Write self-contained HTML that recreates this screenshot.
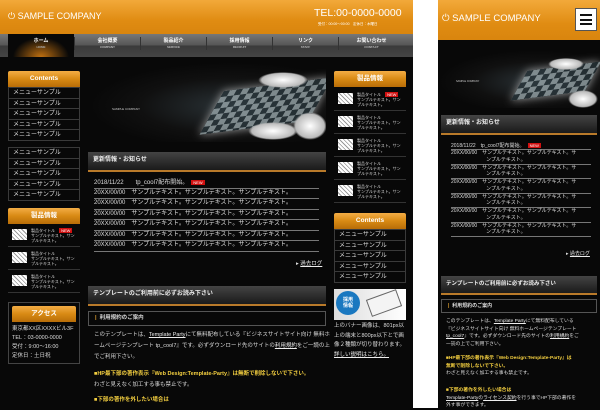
<!DOCTYPE html><html><head><meta charset="utf-8"><style>
*{margin:0;padding:0;box-sizing:border-box}
html,body{background:#080808 !important}
body{width:600px;height:408px;overflow:hidden;font-family:"Liberation Sans","Noto Sans CJK JP",sans-serif;color:#ddd !important;position:relative}
.a{position:absolute}
.bk{background:#080808 !important}
.or{background:linear-gradient(#f2a93a,#e08c12 60%,#d9850e)}
.oh{background:linear-gradient(#f3ad45,#d88a14 50%,#b86d08);text-align:center;font-size:6.5px;font-weight:bold;color:#fff !important;line-height:16px;border-radius:2px 2px 0 0}
.menu{border-top:1px solid #3a3a3a}
.menu div{height:10.6px;border:1px solid #3a3a3a;border-top:none;font-size:6px;line-height:10px;padding-left:4px}
.menu div span,.news span.x,.t span.x{color:#ddd !important}
.bar{background:linear-gradient(#444,#1a1a1a);border-bottom:2px solid #b97a2a;font-size:6px;font-weight:bold;padding-left:5px;color:#eee !important}
.news div{font-size:6px;height:10.5px;line-height:9px;border-bottom:1.5px solid #777;white-space:nowrap}
.new{background:#d01010;color:#fff !important;font-size:4px;padding:0 2px;margin-left:3px}
.t{font-size:5.5px;color:#ddd !important;white-space:nowrap}
.menu div,.news div,.news,.prod b,.t,u{color:#ddd !important}
.y{color:#f5d040 !important;font-weight:bold}
u{color:#eee !important}
.prod{height:23px;border-bottom:1px solid #333;position:relative}
.prod i{position:absolute;left:4px;top:5px;width:15px;height:11px;background:repeating-linear-gradient(45deg,#fff 0 2px,#999 2px 3px)}
.prod b{position:absolute;left:23px;top:4px;font-size:4px;line-height:5px;font-weight:normal}
.chess{background:radial-gradient(ellipse at 60% 55%,#2a3236 0,#101010 45%,#080808 70%)}
.board{position:absolute;background:repeating-conic-gradient(#a9b8bc 0 25%,#2c3a40 0 50%) 0 0/12px 12px;transform:skew(-35deg) rotate(-8deg);opacity:.7;box-shadow:0 0 8px #ccc}
.pc{position:absolute;border-radius:40%;background:radial-gradient(#fff,#bbb 60%,transparent 70%)}
</style></head><body>
<svg class="a" style="left:0;top:0" width="600" height="408"><rect x="0" y="0" width="413" height="408" fill="#080808"/><rect x="413" y="0" width="25" height="408" fill="#ffffff"/><rect x="438" y="0" width="162" height="408" fill="#080808"/></svg>
<!-- desktop -->
<div class="a or" style="left:0;top:0;width:413px;height:34px"></div>
<div class="a" style="left:8px;top:11px;font-size:9px;color:#fff !important">⏻ SAMPLE COMPANY</div>
<div class="a" style="left:314px;top:7px;font-size:10.5px;color:#fff">TEL:00-0000-0000</div>
<div class="a" style="left:318px;top:22px;font-size:3.5px;color:#fff">受付：00:00〜00:00　定休日：木曜日</div>
<div class="a" style="left:0;top:34px;width:413px;height:23px;background:linear-gradient(#777,#555 50%,#3a3a3a 50%,#444)"></div>
<div class="a" style="left:8px;top:34px;width:66px;height:23px;background:radial-gradient(ellipse at 50% 100%,#c07010 0,#080808 60%)"></div>
<div class="a" style="left:8px;top:37px;width:398px;display:flex;font-size:5px;font-weight:bold;text-align:center;color:#fff">
<div style="width:66px">ホーム<br><span style="font-size:3px;color:#aaa">HOME</span></div>
<div style="width:66px;border-left:1px solid #333">会社概要<br><span style="font-size:3px;color:#bbb">COMPANY</span></div>
<div style="width:66px;border-left:1px solid #333">製品紹介<br><span style="font-size:3px;color:#bbb">SERVICE</span></div>
<div style="width:66px;border-left:1px solid #333">採用情報<br><span style="font-size:3px;color:#bbb">RECRUIT</span></div>
<div style="width:66px;border-left:1px solid #333">リンク<br><span style="font-size:3px;color:#bbb">STAFF</span></div>
<div style="width:66px;border-left:1px solid #333">お問い合わせ<br><span style="font-size:3px;color:#bbb">CONTACT</span></div>
</div>
<!-- left col -->
<div class="a oh" style="left:8px;top:71px;width:72px">Contents</div>
<div class="a menu" style="left:8px;top:87px;width:72px"><div>メニューサンプル</div><div>メニューサンプル</div><div>メニューサンプル</div><div>メニューサンプル</div><div>メニューサンプル</div></div>
<div class="a menu" style="left:8px;top:147px;width:72px"><div>メニューサンプル</div><div>メニューサンプル</div><div>メニューサンプル</div><div>メニューサンプル</div><div>メニューサンプル</div></div>
<div class="a oh" style="left:8px;top:208px;width:72px">製品情報</div>
<div class="a" style="left:8px;top:224px;width:72px">
<div class="prod"><i></i><b>製品タイトル <span class="new">NEW</span><br>サンプルテキスト。サン<br>プルテキスト。</b></div>
<div class="prod"><i></i><b>製品タイトル<br>サンプルテキスト。サン<br>プルテキスト。</b></div>
<div class="prod"><i></i><b>製品タイトル<br>サンプルテキスト。サン<br>プルテキスト。</b></div></div>
<div class="a" style="left:8px;top:302px;width:72px;height:62px;border:1px solid #444"></div>
<div class="a oh" style="left:12px;top:306px;width:64px">アクセス</div>
<div class="a t" style="left:12px;top:325px;line-height:9px">東京都XX区XXXXビル3F<br>TEL：03-0000-0000<br>受付：9:00〜16:00<br>定休日：土日祝</div>
<!-- main -->
<div class="a chess" style="left:88px;top:62px;width:238px;height:80px;overflow:hidden">
<div class="board" style="left:128px;top:22px;width:100px;height:44px"></div>
<div class="pc" style="left:170px;top:10px;width:50px;height:16px"></div>
<div class="pc" style="left:205px;top:50px;width:34px;height:28px"></div>
<div class="pc" style="left:160px;top:60px;width:50px;height:18px"></div>
<div class="a" style="left:24px;top:45px;font-size:3px;color:#ccc">SAMPLE COMPANY</div></div>
<div class="a bar" style="left:88px;top:152px;width:238px;height:20px;line-height:17px">更新情報・お知らせ</div>
<div class="a news" style="left:94px;top:178px;width:225px">
<div>2018/11/22　　tp_cool7配布開始。<span class="new">NEW</span></div>
<div>20XX/00/00　サンプルテキスト。サンプルテキスト。サンプルテキスト。</div>
<div>20XX/00/00　サンプルテキスト。サンプルテキスト。サンプルテキスト。</div>
<div>20XX/00/00　サンプルテキスト。サンプルテキスト。サンプルテキスト。</div>
<div>20XX/00/00　サンプルテキスト。サンプルテキスト。サンプルテキスト。</div>
<div>20XX/00/00　サンプルテキスト。サンプルテキスト。サンプルテキスト。</div>
<div>20XX/00/00　サンプルテキスト。サンプルテキスト。サンプルテキスト。</div></div>
<div class="a t" style="left:296px;top:259px">▸ <u>過去ログ</u></div>
<div class="a bar" style="left:88px;top:286px;width:238px;height:20px;line-height:17px">テンプレートのご利用前に必ずお読み下さい</div>
<div class="a t" style="left:88px;top:311px;width:238px;height:15px;border:1px solid #555;line-height:13px;padding-left:6px;font-weight:bold"><span style="color:#e0a030 !important">|</span>&nbsp; 利用規約のご案内</div>
<div class="a t" style="left:94px;top:330px;line-height:11px">このテンプレートは、<u>Template Party</u>にて無料配布している『ビジネスサイトサイト向け 無料ホ<br>ームページテンプレート tp_cool7』です。必ずダウンロード先のサイトの<u>利用規約</u>をご一読の上<br>でご利用下さい。</div>
<div class="a t" style="left:94px;top:369px;line-height:11px"><span class="y">■HP最下部の著作表示『Web Design:Template-Party』は無断で削除しないで下さい。</span><br>わざと見えなく加工する事も禁止です。</div>
<div class="a t y" style="left:94px;top:395px">■下部の著作を外したい場合は</div>
<!-- right col -->
<div class="a oh" style="left:334px;top:71px;width:72px">製品情報</div>
<div class="a" style="left:334px;top:88px;width:72px">
<div class="prod"><i></i><b>製品タイトル <span class="new">NEW</span><br>サンプルテキスト。サン<br>プルテキスト。</b></div>
<div class="prod"><i></i><b>製品タイトル<br>サンプルテキスト。サン<br>プルテキスト。</b></div>
<div class="prod"><i></i><b>製品タイトル<br>サンプルテキスト。サン<br>プルテキスト。</b></div>
<div class="prod"><i></i><b>製品タイトル<br>サンプルテキスト。サン<br>プルテキスト。</b></div>
<div class="prod"><i></i><b>製品タイトル<br>サンプルテキスト。サン<br>プルテキスト。</b></div></div>
<div class="a oh" style="left:334px;top:213px;width:72px">Contents</div>
<div class="a menu" style="left:334px;top:229px;width:72px"><div>メニューサンプル</div><div>メニューサンプル</div><div>メニューサンプル</div><div>メニューサンプル</div><div>メニューサンプル</div></div>
<div class="a" style="left:334px;top:289px;width:72px;height:31px;background:linear-gradient(90deg,#ddd,#fff)"></div>
<div class="a" style="left:336px;top:291px;width:24px;height:24px;border-radius:50%;background:#1a78c0;font-size:5px;font-weight:bold;text-align:center;padding-top:6px;line-height:6px;color:#fff">採用<br>情報</div>
<div class="a" style="left:368px;top:294px;width:32px;height:18px;background:#f4f4f4;border:1px solid #666;transform:rotate(-20deg)"></div>
<div class="a t" style="left:334px;top:322px;line-height:9.5px">上のバナー画像は、801px以<br>上の端末と800px以下とで画<br>像２種類が切り替わります。<br><u>詳しい説明はこちら。</u></div>
<!-- mobile -->
<div class="a or" style="left:438px;top:0;width:162px;height:40px"></div>
<div class="a" style="left:442px;top:13px;font-size:9.5px;color:#fff">⏻ SAMPLE COMPANY</div>
<div class="a" style="left:575px;top:8px;width:22px;height:23px;background:#fff;border:1px solid #555;padding:5px 4px">
<div style="height:2px;background:#111;margin-bottom:2.5px"></div><div style="height:2px;background:#111;margin-bottom:2.5px"></div><div style="height:2px;background:#111"></div></div>
<div class="a chess" style="left:438px;top:50px;width:162px;height:58px;overflow:hidden">
<div class="board" style="left:84px;top:16px;width:68px;height:30px"></div>
<div class="pc" style="left:110px;top:8px;width:36px;height:12px"></div>
<div class="pc" style="left:130px;top:40px;width:30px;height:18px"></div>
<div class="a" style="left:18px;top:30px;font-size:2.5px;color:#ccc">SAMPLE COMPANY</div></div>
<div class="a bar" style="left:441px;top:115px;width:156px;height:20px;line-height:17px">更新情報・お知らせ</div>
<div class="a" style="left:451px;top:142px;width:140px">
<div class="t" style="height:8px;border-bottom:1.5px solid #777;font-size:5px">2018/11/22　tp_cool7配布開始。<span class="new">NEW</span></div>
<div class="t" style="height:14.5px;border-bottom:1.5px solid #777;font-size:5px;line-height:6.5px">20XX/00/00　サンプルテキスト。サンプルテキスト。サ<br>　　　　　　　ンプルテキスト。</div>
<div class="t" style="height:14.5px;border-bottom:1.5px solid #777;font-size:5px;line-height:6.5px">20XX/00/00　サンプルテキスト。サンプルテキスト。サ<br>　　　　　　　ンプルテキスト。</div>
<div class="t" style="height:14.5px;border-bottom:1.5px solid #777;font-size:5px;line-height:6.5px">20XX/00/00　サンプルテキスト。サンプルテキスト。サ<br>　　　　　　　ンプルテキスト。</div>
<div class="t" style="height:14.5px;border-bottom:1.5px solid #777;font-size:5px;line-height:6.5px">20XX/00/00　サンプルテキスト。サンプルテキスト。サ<br>　　　　　　　ンプルテキスト。</div>
<div class="t" style="height:14.5px;border-bottom:1.5px solid #777;font-size:5px;line-height:6.5px">20XX/00/00　サンプルテキスト。サンプルテキスト。サ<br>　　　　　　　ンプルテキスト。</div>
<div class="t" style="height:14.5px;border-bottom:1.5px solid #777;font-size:5px;line-height:6.5px">20XX/00/00　サンプルテキスト。サンプルテキスト。サ<br>　　　　　　　ンプルテキスト。</div></div>
<div class="a t" style="left:566px;top:250px;font-size:5px">▸ <u>過去ログ</u></div>
<div class="a bar" style="left:441px;top:276px;width:156px;height:19px;line-height:16px;font-size:5.5px">テンプレートのご利用前に必ずお読み下さい</div>
<div class="a t" style="left:441px;top:299px;width:156px;height:14px;border:1px solid #555;font-size:5px;line-height:12px;padding-left:6px;font-weight:bold"><span style="color:#e0a030 !important">|</span>&nbsp; 利用規約のご案内</div>
<div class="a t" style="left:446px;top:318px;font-size:4.8px;line-height:7.5px">このテンプレートは、<u>Template Party</u>にて無料配布している<br>『ビジネスサイトサイト向け 無料ホームページテンプレート<br><u>tp_cool7</u>』です。必ずダウンロード先のサイトの<u>利用規約</u>をご<br>一読の上でご利用下さい。</div>
<div class="a t" style="left:446px;top:355px;font-size:4.8px;line-height:7.5px"><span class="y">■HP最下部の著作表示『Web Design:Template-Party』は<br>無断で削除しないで下さい。</span><br>わざと見えなく加工する事も禁止です。</div>
<div class="a t" style="left:446px;top:387px;font-size:4.8px;line-height:7.5px"><span class="y">■下部の著作を外したい場合は</span><br><u>Template-Party</u>の<u>ライセンス契約</u>を行う事でHP下部の著作を<br>外す事ができます。</div>
</body></html>
